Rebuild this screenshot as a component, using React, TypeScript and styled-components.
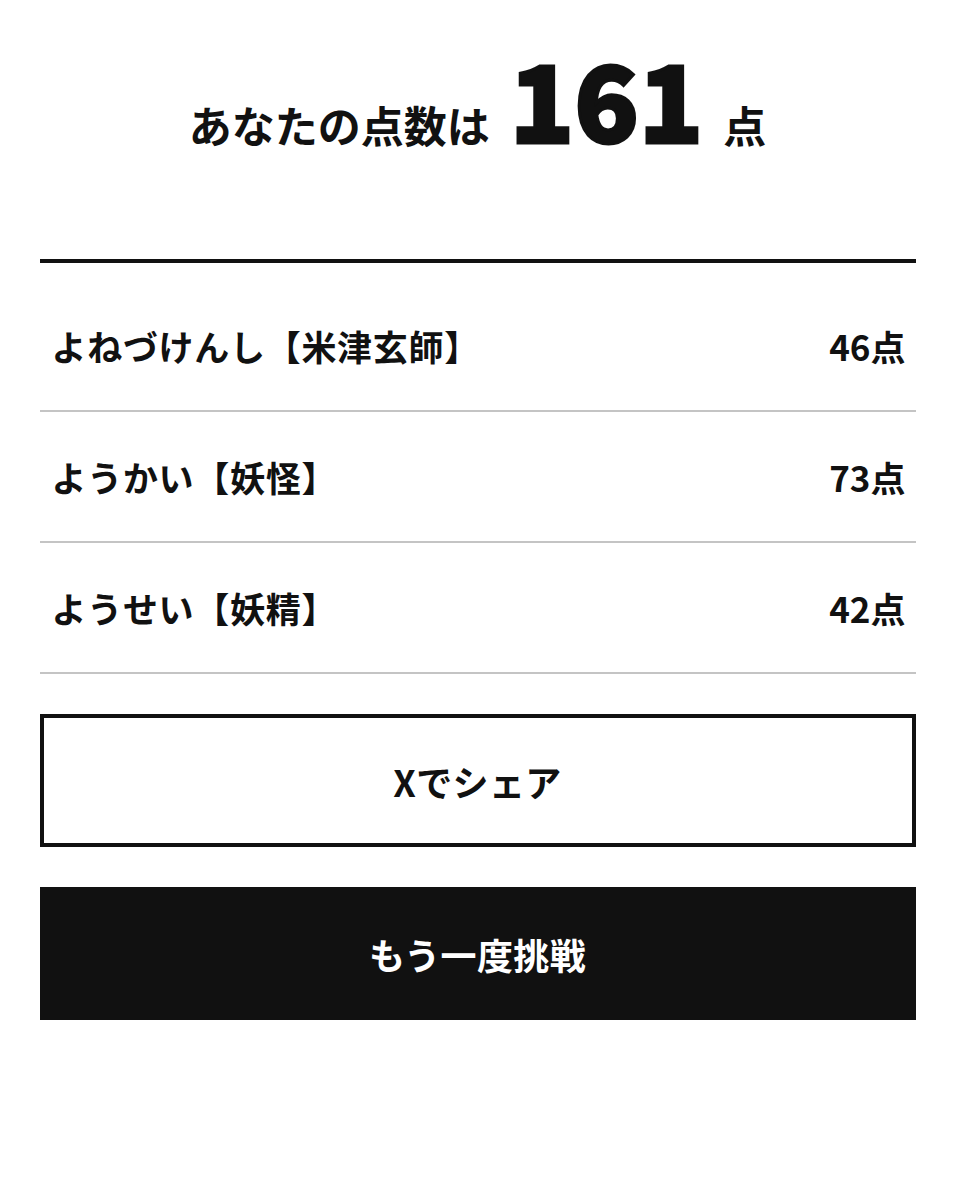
import React from "react";
import styled, { createGlobalStyle } from "styled-components";

const Global = createGlobalStyle`
  html, body { margin: 0; padding: 0; background: #ffffff; }
  body {
    font-family: "Noto Sans CJK JP", "Noto Sans", sans-serif;
    color: #111111;
  }
`;

const Page = styled.main`
  width: 876px;
  margin: 0 auto;
  padding: 44px 0 0;
`;

const ScoreHeading = styled.h1`
  margin: 0;
  display: flex;
  justify-content: center;
  align-items: baseline;
  gap: 20px;
  font-weight: 700;
  line-height: 1;
`;

const Label = styled.span`
  font-size: 43px;
  letter-spacing: 0;
`;

const BigNumber = styled.span`
  font-size: 106px;
  font-weight: 900;
  letter-spacing: 0;
  -webkit-text-stroke: 3px #111111;
`;

const Rule = styled.hr`
  margin: 109px 0 0;
  border: 0;
  height: 4px;
  background: #111111;
`;

const List = styled.ul`
  list-style: none;
  margin: 0;
  padding: 18px 0 0;
`;

const Row = styled.li`
  display: flex;
  align-items: center;
  justify-content: space-between;
  height: 129px;
  padding: 0 10px 0 12px;
  border-bottom: 2px solid #c4c4c4;
  font-size: 35px;
  font-weight: 700;
  letter-spacing: 0.02em;
`;

const Score = styled.span`
  letter-spacing: 0;
`;

const Actions = styled.div`
  display: flex;
  flex-direction: column;
  gap: 40px;
  margin-top: 40px;
`;

const Button = styled.button<{ $dark?: boolean }>`
  height: 133px;
  width: 100%;
  border: 4px solid #111111;
  background: ${(p) => (p.$dark ? "#111111" : "#ffffff")};
  color: ${(p) => (p.$dark ? "#ffffff" : "#111111")};
  font-family: "Noto Sans CJK JP", "Noto Sans", sans-serif;
  font-size: 36px;
  font-weight: 700;
  letter-spacing: 0.01em;
  cursor: pointer;
`;

const rows = [
  { name: "よねづけんし【米津玄師】", score: 46 },
  { name: "ようかい【妖怪】", score: 73 },
  { name: "ようせい【妖精】", score: 42 },
];

export default function App() {
  return (
    <>
      <Global />
      <Page>
        <ScoreHeading>
          <Label>あなたの点数は</Label>
          <BigNumber>161</BigNumber>
          <Label>点</Label>
        </ScoreHeading>
        <Rule />
        <List>
          {rows.map((r) => (
            <Row key={r.name}>
              <span>{r.name}</span>
              <Score>{r.score}点</Score>
            </Row>
          ))}
        </List>
        <Actions>
          <Button>Xでシェア</Button>
          <Button $dark>もう一度挑戦</Button>
        </Actions>
      </Page>
    </>
  );
}
